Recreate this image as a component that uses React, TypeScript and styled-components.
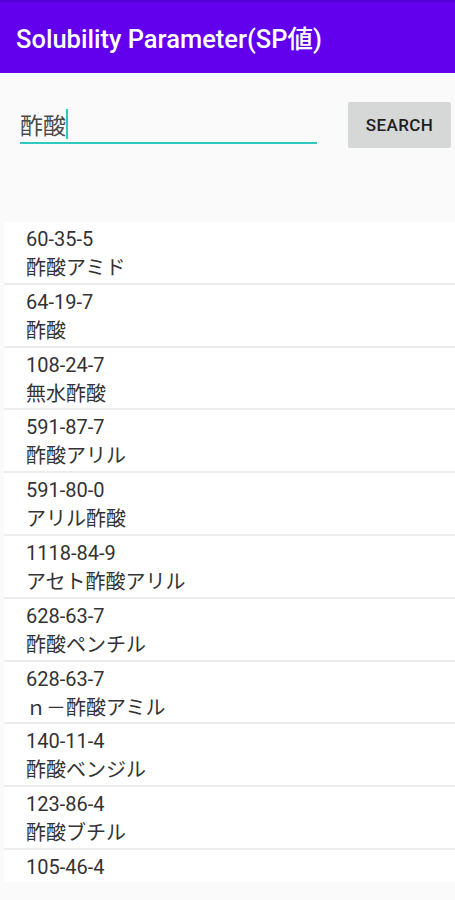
import React from "react";
import styled, { createGlobalStyle } from "styled-components";

const Global = createGlobalStyle`
  html, body { margin: 0; padding: 0; background: #fafafa; }
  body { font-family: Roboto, "Noto Sans CJK JP", sans-serif; }
  * { box-sizing: border-box; }
`;

const Screen = styled.div`
  width: 455px;
  height: 900px;
  background: #fafafa;
  display: flex;
  flex-direction: column;
  overflow: hidden;
`;

const AppBar = styled.header`
  height: 73px;
  background: #6200ee;
  border-top: 2px solid #5400d8;
  display: flex;
  align-items: center;
  padding: 0 16px 2px;
`;

const Title = styled.h1`
  margin: 0;
  color: #ffffff;
  font-family: Roboto, "Noto Sans CJK JP", sans-serif;
  font-weight: 500;
  font-size: 25.5px;
  letter-spacing: 0;
`;

const SearchRow = styled.div`
  display: flex;
  align-items: flex-start;
  padding: 29px 4px 0 20px;
  height: 149px;
`;

const Field = styled.div`
  width: 297px;
  height: 42px;
  border-bottom: 2px solid #2ec9c0;
  display: flex;
  align-items: center;
  padding-top: 4px;
`;

const FieldText = styled.span`
  font-family: "Noto Sans CJK JP", sans-serif;
  font-size: 23px;
  color: #4a4a4a;
  line-height: 30px;
`;

const Caret = styled.span`
  display: inline-block;
  width: 2px;
  height: 30px;
  background: #2ec9c0;
`;

const SearchButton = styled.button`
  margin-left: auto;
  width: 103px;
  height: 46px;
  background: #d6d7d7;
  border: none;
  border-radius: 2px;
  font-family: Roboto, sans-serif;
  font-weight: 500;
  font-size: 17px;
  letter-spacing: 0.4px;
  color: #1e1e1e;
  padding: 0;
`;

const List = styled.ul`
  list-style: none;
  margin: 0 0 0 4px;
  padding: 0;
  height: 660px;
  overflow: hidden;
  background: #ffffff;
`;

const Item = styled.li`
  height: 62.8px;
  padding: 4px 0 0 22px;
  border-bottom: 2px solid #ededed;
  display: flex;
  flex-direction: column;
`;

const Cas = styled.span`
  font-family: Roboto, "Noto Sans CJK JP", sans-serif;
  font-size: 20px;
  line-height: 27px;
  color: #333;
`;

const Name = styled.span`
  font-family: "Noto Sans CJK JP", sans-serif;
  font-size: 20px;
  line-height: 27px;
  color: #333;
`;

const items: [string, string?][] = [
  ["60-35-5", "酢酸アミド"],
  ["64-19-7", "酢酸"],
  ["108-24-7", "無水酢酸"],
  ["591-87-7", "酢酸アリル"],
  ["591-80-0", "アリル酢酸"],
  ["1118-84-9", "アセト酢酸アリル"],
  ["628-63-7", "酢酸ペンチル"],
  ["628-63-7", "ｎ－酢酸アミル"],
  ["140-11-4", "酢酸ベンジル"],
  ["123-86-4", "酢酸ブチル"],
  ["105-46-4"],
];

export default function App() {
  return (
    <Screen>
      <Global />
      <AppBar>
        <Title>Solubility Parameter(SP値)</Title>
      </AppBar>
      <SearchRow>
        <Field>
          <FieldText>酢酸</FieldText>
          <Caret />
        </Field>
        <SearchButton>SEARCH</SearchButton>
      </SearchRow>
      <List>
        {items.map(([cas, name], i) => (
          <Item key={i}>
            <Cas>{cas}</Cas>
            {name && <Name>{name}</Name>}
          </Item>
        ))}
      </List>
    </Screen>
  );
}
